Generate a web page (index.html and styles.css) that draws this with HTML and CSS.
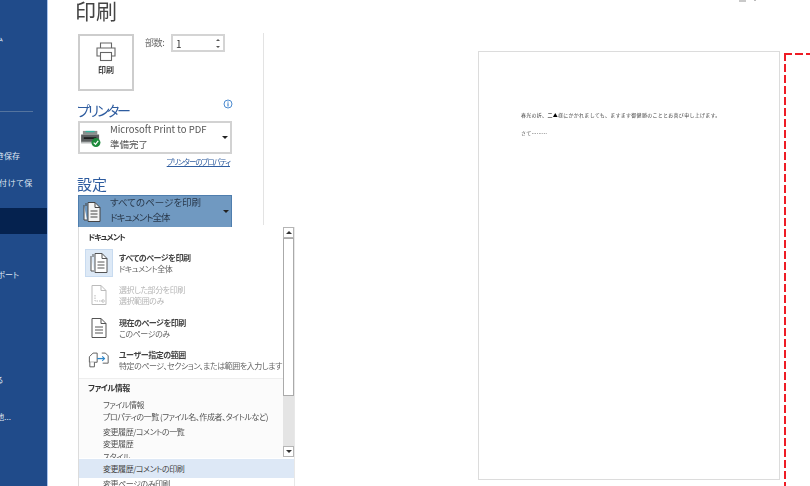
FILE: index.html
```html
<!DOCTYPE html>
<html lang="ja">
<head>
<meta charset="utf-8">
<title>印刷</title>
<link rel="stylesheet" href="styles.css">
</head>
<body>
<div class="app">
  <aside class="side">
    <div class="nav nav-home">ホーム</div>
    <div class="nav-rule"></div>
    <div class="nav nav-save">上書き保存</div>
    <div class="nav nav-saveas">名前を付けて保</div>
    <div class="nav-current"></div>
    <div class="nav nav-export">エクスポート</div>
    <div class="nav nav-close">閉じる</div>
    <div class="nav nav-other">その他...</div>
  </aside>
  <main class="panel">
    <h1 class="title">印刷</h1>
    <div class="controls">
      <div class="print-row">
        <div class="print-btn">
          <svg class="print-icon" viewBox="0 0 20 20" width="20" height="20" fill="none" stroke="#666" stroke-width="1.1"><path d="M4.5 6V1h11v5"/><path d="M4.5 14H1V6h18v8h-3.500"/><rect x="4.500" y="10.500" width="11" height="8"/></svg>
          <span class="print-label">印刷</span>
        </div>
        <span class="copies-label">部数:</span>
        <div class="spin">
          <span>1</span>
          <span class="spin-arrows"><i class="mini-up"></i><i class="mini-down"></i></span>
        </div>
      </div>
      <div class="head-row">
        <h2 class="section-head section-printer">プリンター</h2>
        <svg class="info" viewBox="0 0 10 10" width="10" height="10"><circle cx="5" cy="5" r="4" fill="#fff" stroke="#4d8bd0" stroke-width="1"/><rect x="4.400" y="4.200" width="1.200" height="3.300" fill="#4d8bd0"/><rect x="4.400" y="2.500" width="1.200" height="1.100" fill="#4d8bd0"/></svg>
      </div>
      <div class="drop">
        <svg class="printer-img" viewBox="0 0 24 20" width="22" height="18">
          <rect x="3" y="1" width="16" height="4" fill="#8b8f8e"/>
          <rect x="6" y="1" width="10" height="1.500" fill="#35b5a0"/>
          <rect x="1" y="5" width="20" height="9" fill="#5b5f60"/>
          <rect x="4" y="8" width="14" height="2" fill="#1d1f20"/>
          <rect x="1" y="13" width="20" height="2" fill="#b8bcbc"/>
          <circle cx="17.500" cy="14" r="5" fill="#1e8a3c"/>
          <path d="M15 14l2 2 3-4" fill="none" stroke="#fff" stroke-width="1.400"/>
        </svg>
        <div class="drop-text"><div>Microsoft Print to PDF</div><div>準備完了</div></div>
        <span class="caret"></span>
      </div>
      <div class="link-row"><a class="prop-link">プリンターのプロパティ</a></div>
      <h2 class="section-head section-set">設定</h2>
      <div class="drop drop-active">
        <svg class="pages-img" viewBox="0 0 20 22" width="20" height="22" fill="#f4f4f4" stroke="#444" stroke-width="1"><path d="M2 4v15h3"/><path d="M4 2v3"/><path d="M6 1.500h7l5 5V20.500H6z"/><path d="M13 1.500v5h5M8.500 10h7M8.500 13h7M8.500 16h7" fill="none"/></svg>
        <div class="drop-text"><div>すべてのページを印刷</div><div class="narrow">ドキュメント全体</div></div>
        <span class="caret"></span>
      </div>
    </div>
  </main>
  <section class="preview">
    <div class="top-mark"><i></i><b></b></div>
    <div class="page-area">
      <div class="page">
        <p>春光の折、<span class="dark">二▲</span>様にかかれましても、ますます御健勝のこととお喜び申し上げます。</p>
        <p class="second">さて………</p>
      </div>
      <div class="dashed"></div>
    </div>
  </section>

  <div class="menu">
    <div class="menu-body">
      <div class="menu-head menu-head-doc">ドキュメント</div>
      <div class="opt">
        <div class="opt-icon opt-icon-on">
          <svg viewBox="0 0 20 22" width="20" height="22" fill="#fff" stroke="#555" stroke-width="1"><path d="M2 4v15h3"/><path d="M4 2v3"/><path d="M6 1.500h7l5 5V20.500H6z"/><path d="M13 1.500v5h5M8.500 10h7M8.500 13h7M8.500 16h7" fill="none"/></svg>
        </div>
        <div class="opt-text"><div class="opt-title">すべてのページを印刷</div><div class="opt-sub">ドキュメント全体</div></div>
      </div>
      <div class="opt opt-off">
        <div class="opt-icon">
          <svg viewBox="0 0 20 22" width="20" height="22" fill="#fff" stroke="#bbb" stroke-width="1"><path d="M3 1.500h9l5 5V20.500H3z"/><path d="M12 1.500v5h5" fill="none"/><path d="M6 11v6h8M14 15v4M12 17h4" fill="none" stroke-dasharray="1.500 1"/></svg>
        </div>
        <div class="opt-text"><div class="opt-title">選択した部分を印刷</div><div class="opt-sub">選択範囲のみ</div></div>
      </div>
      <div class="opt">
        <div class="opt-icon">
          <svg viewBox="0 0 20 22" width="20" height="22" fill="#fff" stroke="#555" stroke-width="1"><path d="M3 1.500h9l5 5V20.500H3z"/><path d="M12 1.500v5h5M6 10h8M6 13h8M6 16h8" fill="none"/></svg>
        </div>
        <div class="opt-text"><div class="opt-title">現在のページを印刷</div><div class="opt-sub">このページのみ</div></div>
      </div>
      <div class="opt">
        <div class="opt-icon">
          <svg viewBox="0 0 24 18" width="22" height="17" fill="#fff" stroke="#555" stroke-width="1"><path d="M1.500 6l4-4h4.500v10h-8.500z"/><path d="M7 12v5H2v-5"/><path d="M15 2h4l3 3v8h-6"/><path d="M10 8h8" stroke="#2f86c8" stroke-width="1.400"/><path d="M15.500 5.500l2.500 2.500-2.500 2.500" stroke="#2f86c8" fill="none" stroke-width="1.200"/></svg>
        </div>
        <div class="opt-text"><div class="opt-title">ユーザー指定の範囲</div><div class="opt-sub">特定のページ、セクション、または範囲を入力します</div></div>
      </div>
      <div class="menu-head menu-head-band">ファイル情報</div>
      <div class="plain">
        <div class="plain-item">ファイル情報</div>
        <div class="plain-item">プロパティの一覧 (ファイル名、作成者、タイトルなど)</div>
        <div class="plain-item plain-gap">変更履歴/コメントの一覧</div>
        <div class="plain-item">変更履歴</div>
        <div class="plain-item plain-cut">スタイル</div>
      </div>
      <div class="plain-hover">変更履歴/コメントの印刷</div>
      <div class="plain-item plain-last">変更ページのみ印刷</div>
    </div>
    <div class="scroll">
      <div class="sb-btn"><span class="tri-up"></span></div>
      <div class="sb-thumb"></div>
      <div class="sb-track"></div>
      <div class="sb-btn"><span class="tri-down"></span></div>
    </div>
  </div>
</div>
</body>
</html>
```
FILE: styles.css
```css
* { box-sizing: border-box; }
html, body { margin: 0; padding: 0; }
body {
  width: 810px;
  height: 486px;
  overflow: hidden;
  background: #fff;
  font-family: "Noto Sans CJK JP", "Noto Sans", sans-serif;
  font-feature-settings: "palt";
  color: #444;
}
.app { position: relative; display: flex; width: 810px; height: 486px; overflow: hidden; filter: blur(0.35px); }

.side {
  width: 48px;
  flex: none;
  background: #204b8a;
  border-right: 1px solid #a9c4ee;
  color: #dfe7f2;
  font-size: 8px;
  overflow: hidden;
}
.nav { display: flex; justify-content: flex-end; white-space: nowrap; height: 14px; line-height: 14px; }
.nav-home { margin-top: 31px; padding-right: 44px; }
.nav-rule { height: 1px; width: 33px; background: #54749f; margin-top: 66px; }
.nav-save { margin-top: 37px; padding-right: 27px; }
.nav-saveas { margin-top: 13px; padding-right: 0; width: 33px; letter-spacing: .7px; }
.nav-current { height: 26px; background: #05224f; margin-top: 18px; }
.nav-export { margin-top: 34px; padding-right: 28px; }
.nav-close { margin-top: 91px; padding-right: 44px; }
.nav-other { margin-top: 23px; padding-right: 36px; }

.panel { width: 216px; flex: none; padding-left: 27px; }
.title { margin: 0; height: 33px; line-height: 20px; font-size: 21px; font-weight: 400; color: #444; }
.controls { height: 192px; padding-left: 3px; border-right: 1px solid #e3e3e3; padding-right: 30px; }

.print-row { display: flex; align-items: flex-start; height: 60px; }
.print-btn {
  width: 56px; height: 57px; margin-top: 1px;
  border: 2px solid #cdcdcd; display: flex; flex-direction: column; align-items: center; padding-top: 6px;
}
.print-label { font-size: 8px; font-weight: 700; line-height: 10px; margin-top: 3px; color: #444; }
.copies-label { font-size: 9px; margin: 4px 0 0 11px; width: 26px; line-height: 12px; color: #666; letter-spacing: -.4px; }
.spin {
  width: 54px; height: 18px; margin-top: 1px; border: 2px solid #d4d4d4;
  display: flex; justify-content: space-between; align-items: center; padding: 0 3px;
  font-size: 10px; color: #333;
}
.spin-arrows { display: flex; flex-direction: column; gap: 5px; }
.mini-up { display: block; width: 0; height: 0; border-left: 2px solid transparent; border-right: 2px solid transparent; border-bottom: 2px solid #555; }
.mini-down { display: block; width: 0; height: 0; border-left: 2px solid transparent; border-right: 2px solid transparent; border-top: 2px solid #555; }

.head-row { display: flex; justify-content: space-between; align-items: flex-start; height: 21px; margin-top: 7px; }
.section-head { margin: 0 0 0 -1px; font-size: 15px; line-height: 20px; font-weight: 400; color: #2e5c9f; }
.section-printer { font-size: 14px; letter-spacing: -2.2px; }
.info { margin: -1px 0 0 0; }
.drop {
  width: 154px; height: 33px; border: 2px solid #d2d2d2; display: flex; align-items: center;
  padding-left: 0;
}
.printer-img { flex: none; margin-top: 3px; }
.drop-text { margin-left: 8px; padding-bottom: 2px; font-size: 9.500px; line-height: 15px; color: #555; white-space: nowrap; flex: 1; }
.caret { width: 0; height: 0; border-left: 3px solid transparent; border-right: 3px solid transparent; border-top: 3px solid #222; margin-right: 2px; flex: none; }
.link-row { width: 154px; text-align: right; height: 24px; padding-right: 2px; font-size: 7.500px; line-height: 16px; letter-spacing: -1px; }
.prop-link { color: #2e5c9f; text-decoration: underline; }
.section-set { height: 17px; line-height: 12px; }
.drop-active { background: #7099c1; border: 1px solid #4f7eae; padding-left: 3px; }
.drop-active .drop-text { color: #2a3a4d; margin-left: 8px; padding-bottom: 4px; }
.narrow { letter-spacing: -1px; }
.pages-img { flex: none; }

.preview { flex: 1; min-width: 0; }
.top-mark { height: 51px; padding-left: 475px; display: flex; align-items: flex-start; gap: 8px; }
.top-mark i { width: 7px; height: 2px; background: #c9c9c9; display: block; }
.top-mark b { width: 2px; height: 1px; background: #bbb; display: block; }
.page-area { display: flex; gap: 4px; padding-left: 214px; }
.page {
  width: 302px; height: 429px; flex: none; border: 1px solid #dcdcdc; background: #fff;
  padding: 60px 0 0 42px; font-feature-settings: normal; font-size: 5px; line-height: 6px; letter-spacing: .28px; color: #444;
}
.page p { margin: 0; white-space: nowrap; }
.page .second { margin-top: 12px; }
.dark { color: #000; }
.dashed {
  flex: 1; height: 433px; margin-top: 2px;
  background:
    repeating-linear-gradient(to right, #ee1c25 0 8px, transparent 8px 11px) left top / 100% 2px no-repeat,
    repeating-linear-gradient(to bottom, #ee1c25 0 8px, transparent 8px 11px) left top / 2px 100% no-repeat;
}

.menu {
  position: absolute; left: 78px; top: 227px; width: 217px; height: 259px;
  background: #fff; border-left: 1px solid #dcdcdc; border-right: 1px solid #e8e8e8; display: flex;
  font-size: 8px; letter-spacing: -.45px;
}
.menu-body { width: 215px; flex: none; position: relative; }
.menu-head { font-weight: 700; line-height: 12px; color: #333; padding: 4px 0 0 9px; height: 22px; width: 204px; }
.menu-head-doc { letter-spacing: -.9px; }
.opt { display: flex; height: 32.250px; align-items: flex-start; width: 204px; padding-left: 6px; }
.opt-icon { width: 28px; height: 28px; flex: none; display: flex; align-items: center; justify-content: center; border: 1px solid transparent; }
.opt-icon-on { background: #dde9f6; border-color: #c8dbf0; }
.opt-text { margin-left: 6px; padding-top: 3px; white-space: nowrap; }
.opt-title { line-height: 11px; font-weight: 700; color: #444; }
.opt-sub { line-height: 11px; color: #666; }
.opt-off .opt-title, .opt-off .opt-sub { color: #b5b5b5; font-weight: 400; }
.menu-head-band { border-top: 1px solid #eee; background: #fbfbfb; height: 21px; padding-top: 3px; }
.plain { height: 59px; background: #fbfbfb; width: 204px; overflow: hidden; }
.plain-item { line-height: 12px; color: #555; padding-left: 24px; white-space: nowrap; }
.plain-gap { margin-top: 3px; }
.plain-cut { margin-top: 1px; }
.plain-hover { position: absolute; left: 0; top: 232px; width: 215px; height: 19px; background: #dde8f6; line-height: 19px; padding-left: 24px; color: #444; z-index: 1; }
.plain-last { position: absolute; left: 0; top: 251px; }

.scroll { position: absolute; left: 204px; top: 0; width: 11px; height: 230px; display: flex; flex-direction: column; background: #e4e4e4; }
.sb-btn { height: 11px; background: #fff; border: 1px solid #b5b5b5; display: flex; align-items: center; justify-content: center; flex: none; }
.sb-thumb { height: 158px; background: #fff; border: 1px solid #aaa; flex: none; }
.sb-track { flex: 1; background: #e4e4e4; }
.tri-up { width: 0; height: 0; border-left: 3px solid transparent; border-right: 3px solid transparent; border-bottom: 3px solid #333; }
.tri-down { width: 0; height: 0; border-left: 3px solid transparent; border-right: 3px solid transparent; border-top: 3px solid #333; }
```
